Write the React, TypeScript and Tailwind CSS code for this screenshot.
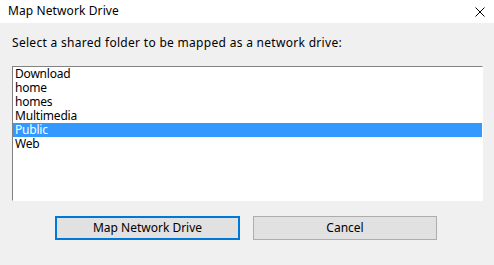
import React from "react";

const items = ["Download", "home", "homes", "Multimedia", "Public", "Web"];

export default function App() {
  return (
    <div
      className="w-[494px] h-[265px] bg-[#f0f0f0] flex flex-col text-[12px] text-black overflow-hidden"
      style={{ fontFamily: '"Noto Sans", "Open Sans", sans-serif' }}
    >
      <div className="h-[23px] bg-white flex items-center justify-between pl-[8px] pr-[9px]">
        <span className="leading-[16px] mt-[-1px] tracking-[0.1px]">Map Network Drive</span>
        <svg width="10" height="10" viewBox="0 0 10 10" className="mt-[1px]">
          <path d="M0.5 0.5 L9.5 9.5 M9.5 0.5 L0.5 9.5" stroke="#000" strokeWidth="1" />
        </svg>
      </div>
      <div className="flex flex-col px-[12px]">
        <div className="mt-[12px] leading-[16px] tracking-[0.3px]">
          Select a shared folder to be mapped as a network drive:
        </div>
        <div className="mt-[15px] w-[471px] h-[135px] bg-white border-t border-l border-[#828282] border-r border-b border-r-white border-b-white flex flex-col">
          {items.map((it) => (
            <div
              key={it}
              className={
                it === "Public"
                  ? "h-[14px] leading-[14px] pl-[2px] bg-[#3399ff] text-white tracking-[-0.2px]"
                  : "h-[14px] leading-[14px] pl-[2px] tracking-[-0.2px]"
              }
            >
              {it}
            </div>
          ))}
        </div>
      </div>
      <div className="mt-[15px] flex pl-[55px] gap-[13px]">
        <button className="w-[185px] h-[24px] border-2 border-[#0078d7] bg-[#e1e1e1] flex items-center justify-center leading-[16px]">
          Map Network Drive
        </button>
        <button className="w-[184px] h-[24px] border border-[#adadad] bg-[#e1e1e1] flex items-center justify-center leading-[16px]">
          Cancel
        </button>
      </div>
    </div>
  );
}
